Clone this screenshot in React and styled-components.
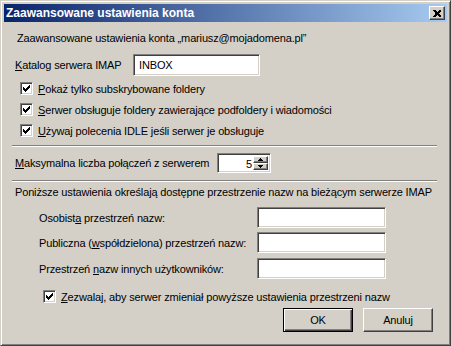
import React from 'react'
import styled, { createGlobalStyle } from 'styled-components'

const Global = createGlobalStyle`
  html, body { margin: 0; padding: 0; background: #d4d0c8; }
  body { font-family: "Liberation Sans", Arial, sans-serif; font-size: 11px; color: #000; }
`

const raised = `
  border: 1px solid;
  border-color: #fff #404040 #404040 #fff;
  box-shadow: inset -1px -1px #808080, inset 1px 1px #d4d0c8;
`
const sunken = `
  border: 1px solid;
  border-color: #808080 #fff #fff #808080;
  box-shadow: inset 1px 1px #404040, inset -1px -1px #d4d0c8;
`

const Window = styled.div`
  box-sizing: border-box;
  width: 451px;
  height: 346px;
  background: #d4d0c8;
  border: 1px solid;
  border-color: #d4d0c8 #404040 #404040 #d4d0c8;
  box-shadow: inset 1px 1px #fff, inset -1px -1px #808080;
  padding: 3px;
  display: flex;
  flex-direction: column;
`

const TitleBar = styled.div`
  height: 18px;
  background: linear-gradient(to right, #0a246a, #a6caf0);
  display: flex;
  align-items: center;
  justify-content: space-between;
  padding: 0 2px 0 2px;
  color: #fff;
  font-weight: bold;
  font-size: 12px;
`

const CloseBtn = styled.div`
  box-sizing: border-box;
  width: 16px;
  height: 14px;
  background: #d4d0c8;
  ${raised}
  display: flex;
  align-items: center;
  justify-content: center;
`

const Body = styled.div`
  display: flex;
  flex-direction: column;
  padding: 0 0 0 11px;
  letter-spacing: -0.15px;
`

const Text = styled.div`
  height: 14px;
  line-height: 14px;
  white-space: nowrap;
  margin-top: ${p => p.$mt || 0}px;
  padding-left: ${p => p.$pl || 0}px;
`

const Row = styled.div`
  display: flex;
  align-items: center;
  height: ${p => p.$h || 21}px;
  margin-top: ${p => p.$mt || 0}px;
  padding-left: ${p => p.$pl || 0}px;
`

const Label = styled.span`
  width: ${p => p.$w ? p.$w + 'px' : 'auto'};
  flex: none;
  white-space: nowrap;
`

const Key = styled.u`
  text-decoration: underline;
`

const Field = styled.div`
  box-sizing: border-box;
  width: ${p => p.$w}px;
  height: ${p => p.$h || 21}px;
  background: #fff;
  ${sunken}
  padding: 0 5px;
  display: flex;
  align-items: center;
`

const Box = styled.div`
  box-sizing: border-box;
  width: 13px;
  height: 13px;
  background: #fff;
  ${sunken}
  flex: none;
  position: relative;
  svg { position: absolute; left: 2px; top: 2px; }
`

const CheckLabel = styled.span`
  margin-left: 5px;
  white-space: nowrap;
`

const Separator = styled.div`
  height: 0;
  border-top: 1px solid #808080;
  border-bottom: 1px solid #fff;
  margin: ${p => p.$mt}px 10px 0 -3px;
`

const Spin = styled.div`
  box-sizing: border-box;
  width: 54px;
  height: 20px;
  background: #fff;
  ${sunken}
  display: flex;
  padding: 2px;
`

const SpinValue = styled.div`
  flex: 1;
  text-align: right;
  line-height: 16px;
  padding-right: 1px;
`

const SpinButtons = styled.div`
  display: flex;
  flex-direction: column;
  width: 15px;
`

const SpinBtn = styled.div`
  box-sizing: border-box;
  flex: 1;
  background: #d4d0c8;
  ${raised}
  display: flex;
  align-items: center;
  justify-content: center;
`

const Buttons = styled.div`
  display: flex;
  justify-content: flex-end;
  gap: 10px;
  margin: 1px 14px 0 0;
`

const Button = styled.div`
  box-sizing: border-box;
  width: 70px;
  height: 24px;
  background: #d4d0c8;
  ${raised}
  display: flex;
  align-items: center;
  justify-content: center;
  ${p => p.$default && `
    border-color: #000;
    box-shadow: inset 1px 1px #fff, inset -1px -1px #404040, inset -2px -2px #808080;
  `}
`

const Check = () => (
  <svg width="7" height="7" viewBox="0 0 7 7" shapeRendering="crispEdges">
    {[2, 3, 4, 3, 2, 1, 0].map((y, x) => (
      <rect key={x} x={x} y={y} width="1" height="3" fill="#000" />
    ))}
  </svg>
)

const CheckRow = ({ children, mt, pl }) => (
  <Row $h={21} $mt={mt} $pl={pl}>
    <Box><Check /></Box>
    <CheckLabel>{children}</CheckLabel>
  </Row>
)

const Arrow = ({ up }) => (
  <svg width="5" height="3" viewBox="0 0 5 3" shapeRendering="crispEdges">
    {up
      ? <><rect x="2" y="0" width="1" height="1" /><rect x="1" y="1" width="3" height="1" /><rect x="0" y="2" width="5" height="1" /></>
      : <><rect x="0" y="0" width="5" height="1" /><rect x="1" y="1" width="3" height="1" /><rect x="2" y="2" width="1" height="1" /></>}
  </svg>
)

export default function App() {
  return (
    <>
      <Global />
      <Window>
        <TitleBar>
          <span>Zaawansowane ustawienia konta</span>
          <CloseBtn>
            <svg width="8" height="7" viewBox="0 0 8 7" shapeRendering="crispEdges">
              <path d="M0 0h2l2 2 2-2h2v1l-2 2v1l2 2v1h-2l-2-2-2 2h-2v-1l2-2v-1l-2-2z" fill="#000" />
            </svg>
          </CloseBtn>
        </TitleBar>
        <Body>
          <Text $mt={9} $pl={2}>Zaawansowane ustawienia konta „mariusz@mojadomena.pl”</Text>
          <Row $h={22} $mt={9}>
            <Label $w={118}><Key>K</Key>atalog serwera IMAP</Label>
            <Field $w={127} $h={22}>INBOX</Field>
          </Row>
          <CheckRow mt={2} pl={5}><Key>P</Key>okaż tylko subskrybowane foldery</CheckRow>
          <CheckRow pl={5}><Key>S</Key>erwer obsługuje foldery zawierające podfoldery i wiadomości</CheckRow>
          <CheckRow pl={5}><Key>U</Key>żywaj polecenia IDLE jeśli serwer je obsługuje</CheckRow>
          <Separator $mt={4} />
          <Row $h={20} $mt={6}>
            <Label $w={202}><Key>M</Key>aksymalna liczba połączeń z serwerem</Label>
            <Spin>
              <SpinValue>5</SpinValue>
              <SpinButtons>
                <SpinBtn><Arrow up /></SpinBtn>
                <SpinBtn><Arrow /></SpinBtn>
              </SpinButtons>
            </Spin>
          </Row>
          <Separator $mt={7} />
          <Text $mt={3}>Poniższe ustawienia określają dostępne przestrzenie nazw na bieżącym serwerze IMAP</Text>
          <Row $mt={8} $pl={24}>
            <Label $w={218}>Osobist<Key>a</Key> przestrzeń nazw:</Label>
            <Field $w={129} />
          </Row>
          <Row $mt={4} $pl={24}>
            <Label $w={218}>Publiczna (<Key>w</Key>spółdzielona) przestrzeń nazw:</Label>
            <Field $w={129} />
          </Row>
          <Row $mt={5} $pl={24}>
            <Label $w={218}>Przestrzeń <Key>n</Key>azw innych użytkowników:</Label>
            <Field $w={129} />
          </Row>
          <CheckRow mt={7} pl={28}><Key>Z</Key>ezwalaj, aby serwer zmieniał powyższe ustawienia przestrzeni nazw</CheckRow>
          <Buttons>
            <Button $default>OK</Button>
            <Button>Anuluj</Button>
          </Buttons>
        </Body>
      </Window>
    </>
  )
}
